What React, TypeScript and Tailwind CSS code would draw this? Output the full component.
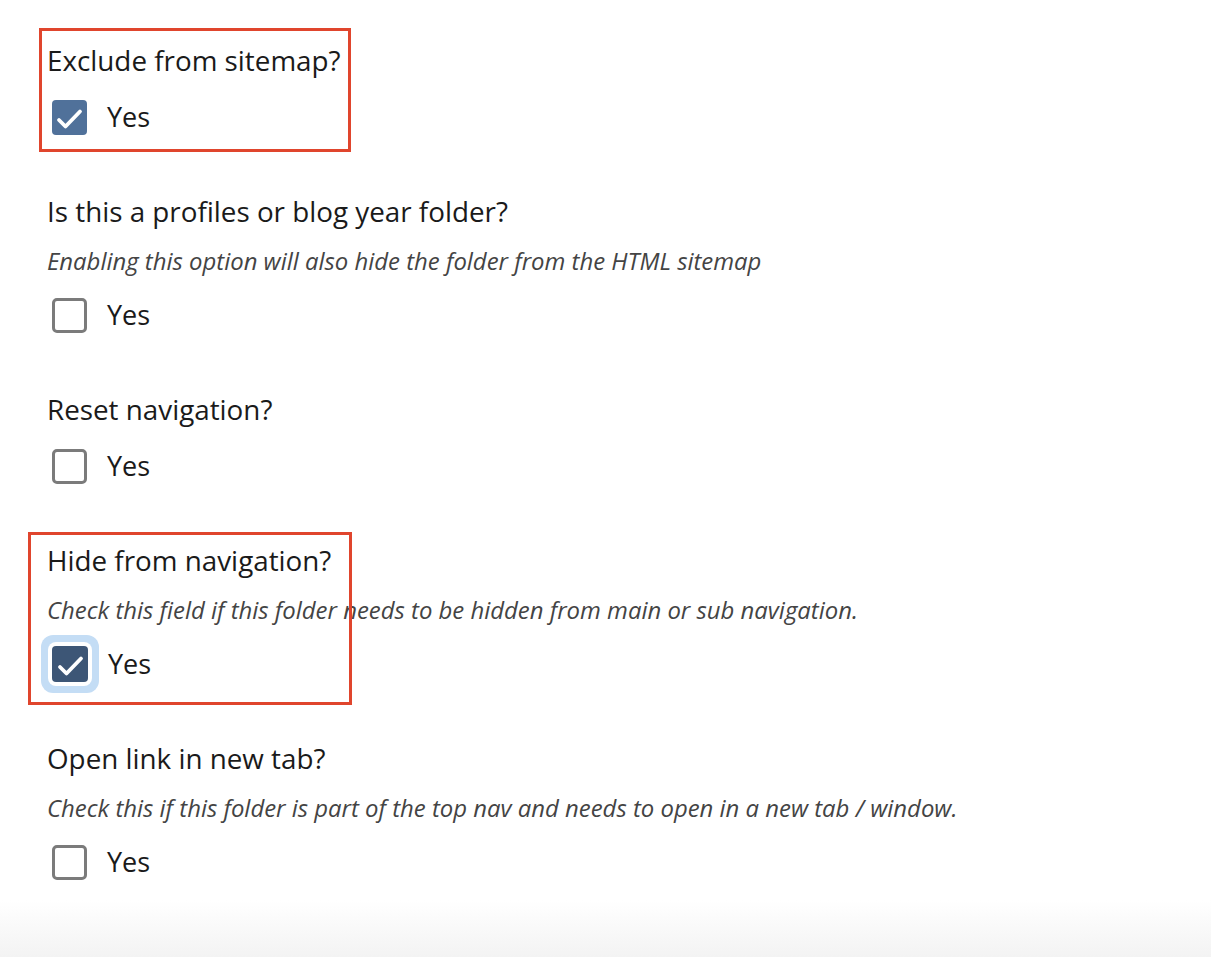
import React from 'react';

interface FieldProps {
  label: string;
  help?: string;
  checked?: boolean;
  focused?: boolean;
  highlight?: 'sitemap' | 'nav';
}

const Check = ({ checked, focused }: { checked?: boolean; focused?: boolean }) => {
  if (!checked) {
    return (
      <span className="block w-[35px] h-[35px] rounded-[5px] border-[3px] border-[#7b7b7b] bg-white" />
    );
  }
  return (
    <span
      className={
        focused
          ? 'flex items-center justify-center w-[36px] h-[36px] rounded-[4px] bg-[#3d5676] ring-[7px] ring-[#c4ddf5] ring-offset-4 ring-offset-white'
          : 'flex items-center justify-center w-[35px] h-[35px] rounded-[4px] bg-[#50719a]'
      }
    >
      <svg width="35" height="35" viewBox="0 0 35 35" fill="none">
        <path
          d="M7 20l6.5 6.5L28 11.5"
          stroke="white"
          strokeWidth="3.8"
          strokeLinecap="round"
          strokeLinejoin="round"
        />
      </svg>
    </span>
  );
};

const Field: React.FC<FieldProps> = ({ label, help, checked, focused, highlight }) => {
  return (
    <div className="relative">
      {highlight === 'sitemap' && (
        <div className="absolute left-[-8px] top-[-14px] w-[312px] h-[124px] border-[3px] border-[#e0452d] pointer-events-none" />
      )}
      {highlight === 'nav' && (
        <div className="absolute left-[-19px] top-[-10px] w-[324px] h-[173px] border-[3px] border-[#e0452d] pointer-events-none" />
      )}
      <div
        className={
          help
            ? 'h-[36px] leading-[36px] text-[27.8px] text-[#1a1a1a] mb-[17px]'
            : 'h-[36px] leading-[36px] text-[27.8px] text-[#1a1a1a] mb-[19px]'
        }
      >
        {label}
      </div>
      {help && (
        <div className="h-[30px] leading-[30px] text-[23.9px] italic text-[#444444] mb-[19px]">
          {help}
        </div>
      )}
      <label className="flex items-center h-[40px] pl-[5px] gap-[20px]">
        <Check checked={checked} focused={focused} />
        <span className="text-[27px] text-[#1a1a1a]">Yes</span>
      </label>
    </div>
  );
};

export default function App() {
  return (
    <div
      className="h-[957px] bg-[linear-gradient(180deg,#ffffff_900px,#f3f3f3_100%)] overflow-hidden"
      style={{ fontFamily: '"Open Sans", "Noto Sans", sans-serif' }}
    >
      <div className="pl-[47px] pt-[42px] flex flex-col gap-[56px]">
        <Field label="Exclude from sitemap?" checked highlight="sitemap" />
        <Field
          label="Is this a profiles or blog year folder?"
          help="Enabling this option will also hide the folder from the HTML sitemap"
        />
        <Field label="Reset navigation?" />
        <Field
          label="Hide from navigation?"
          help="Check this field if this folder needs to be hidden from main or sub navigation."
          checked
          focused
          highlight="nav"
        />
        <Field
          label="Open link in new tab?"
          help="Check this if this folder is part of the top nav and needs to open in a new tab / window."
        />
      </div>
    </div>
  );
}
